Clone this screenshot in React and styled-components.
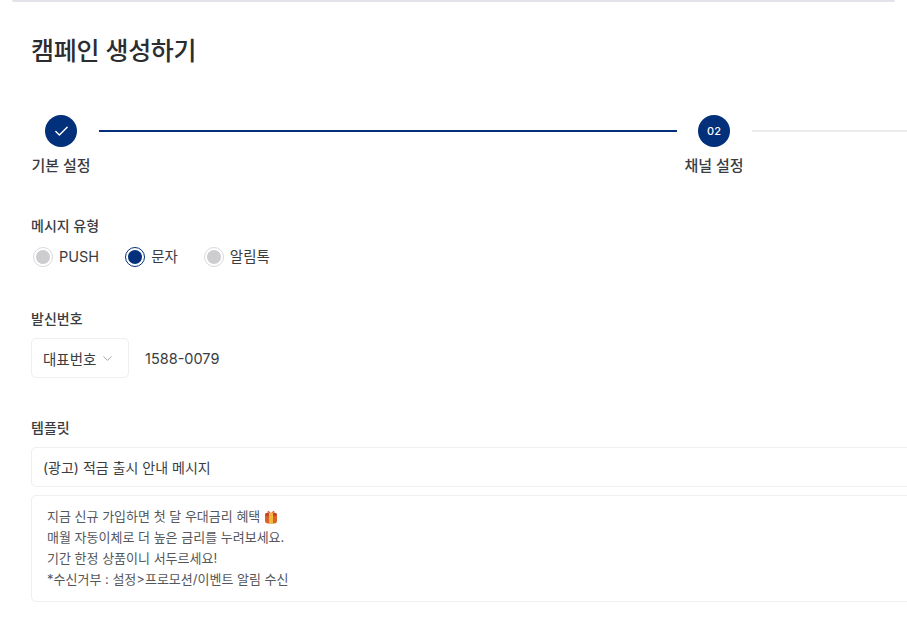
import React from 'react'
import styled, { createGlobalStyle } from 'styled-components'
import { Check, ChevronDown } from 'lucide-react'

const GlobalStyle = createGlobalStyle`
  html, body {
    margin: 0;
    padding: 0;
    background: #fff;
    overflow: hidden;
  }
  * {
    box-sizing: border-box;
  }
  body {
    font-family: Inter, "Noto Sans CJK KR", sans-serif;
    color: #26282b;
  }
`

const Page = styled.div`
  width: 907px;
  height: 640px;
  overflow: hidden;
`

const TopEdge = styled.div`
  width: 883px;
  height: 2px;
  margin-left: 12px;
  background: #e2e2e8;
  border-radius: 0 0 3px 3px;
`

const Content = styled.main`
  width: 960px;
  padding: 32px 0 0 31px;
`

const Title = styled.h1`
  margin: 0;
  font-size: 25px;
  line-height: 34px;
  font-weight: 500;
  letter-spacing: -0.3px;
  color: #2b2d30;
`

const Stepper = styled.div`
  display: flex;
  align-items: flex-start;
  margin-top: 47px;
`

const Step = styled.div`
  flex: none;
  width: 60px;
  display: flex;
  flex-direction: column;
  align-items: center;
  gap: 11px;
`

const StepDot = styled.div`
  width: 32px;
  height: 32px;
  border-radius: 50%;
  background: #03307a;
  color: #fff;
  display: flex;
  align-items: center;
  justify-content: center;
  font-size: 11px;
  font-weight: 500;
`

const StepLabel = styled.span`
  font-size: 15px;
  line-height: 16px;
  font-weight: 500;
  white-space: nowrap;
  color: #3a3c40;
`

const StepLine = styled.div`
  flex: ${(p) => (p.$width ? 'none' : '1')};
  width: ${(p) => (p.$width ? `${p.$width}px` : 'auto')};
  height: 2px;
  margin: 15px 7px 0 8px;
  background: ${(p) => (p.$done ? '#03307a' : '#ebebee')};
`

const Field = styled.section`
  margin-top: ${(p) => p.$top}px;
`

const Label = styled.div`
  font-size: 14px;
  line-height: 18px;
  font-weight: 500;
  color: #3a3c40;
`

const RadioRow = styled.div`
  display: flex;
  align-items: center;
  gap: 26px;
  margin-top: 12px;
  margin-left: 2px;
`

const RadioItem = styled.label`
  display: flex;
  align-items: center;
  gap: 6px;
  font-size: 14.5px;
  line-height: 20px;
  color: #3a3c40;
`

const RadioMark = styled.span`
  width: 20px;
  height: 20px;
  border-radius: 50%;
  border: 1px solid ${(p) => (p.$on ? '#03307a' : '#d9d9dc')};
  display: flex;
  align-items: center;
  justify-content: center;
  &::after {
    content: '';
    width: 14px;
    height: 14px;
    border-radius: 50%;
    background: ${(p) => (p.$on ? '#03307a' : '#cdcdd0')};
  }
`

const SenderRow = styled.div`
  display: flex;
  align-items: center;
  gap: 16px;
  margin-top: 10px;
`

const SelectBox = styled.div`
  width: 98px;
  height: 40px;
  border: 1px solid #efeff1;
  border-radius: 5px;
  display: flex;
  align-items: center;
  gap: 4px;
  padding-left: 11px;
  font-size: 14.5px;
  color: #3a3c40;
  svg {
    color: #8f8f94;
  }
`

const PhoneNumber = styled.span`
  font-size: 14.5px;
  color: #3a3c40;
`

const TemplateInput = styled.div`
  height: 40px;
  margin-top: 10px;
  border: 1px solid #efeff1;
  border-radius: 5px;
  display: flex;
  align-items: center;
  padding-left: 11px;
  font-size: 14px;
  color: #3a3c40;
`

const MessageBox = styled.div`
  margin-top: 8px;
  height: 107px;
  border: 1px solid #efeff1;
  border-radius: 5px;
  padding: 10px 15px;
  font-size: 13px;
  line-height: 21px;
  color: #55575b;
`

const MessageLine = styled.div`
  display: flex;
  align-items: center;
  gap: 4px;
  white-space: nowrap;
`

const GiftIcon = () => (
  <svg width="14" height="14" viewBox="0 0 14 14" aria-hidden="true">
    <rect x="1" y="3" width="12" height="10.5" rx="3" fill="#d9622b" />
    <rect x="1" y="3" width="12" height="3" rx="1.5" fill="#c8402a" />
    <rect x="5" y="3" width="4" height="10.5" fill="#f0b93a" />
    <path d="M7 3 4.4.8 2.8 2.6zM7 3 9.6.8l1.6 1.8z" fill="#e2562c" />
  </svg>
)

const App = () => {
  return (
    <Page>
      <GlobalStyle />
      <TopEdge />
      <Content>
        <Title>캠페인 생성하기</Title>
        <Stepper>
          <Step>
            <StepDot>
              <Check size={17} strokeWidth={2} />
            </StepDot>
            <StepLabel>기본 설정</StepLabel>
          </Step>
          <StepLine $done $width={578} />
          <Step>
            <StepDot>02</StepDot>
            <StepLabel>채널 설정</StepLabel>
          </Step>
          <StepLine />
        </Stepper>

        <Field $top={43}>
          <Label>메시지 유형</Label>
          <RadioRow>
            <RadioItem>
              <RadioMark />
              PUSH
            </RadioItem>
            <RadioItem>
              <RadioMark $on />
              문자
            </RadioItem>
            <RadioItem>
              <RadioMark />
              알림톡
            </RadioItem>
          </RadioRow>
        </Field>

        <Field $top={43}>
          <Label>발신번호</Label>
          <SenderRow>
            <SelectBox>
              대표번호
              <ChevronDown size={15} strokeWidth={1.25} />
            </SelectBox>
            <PhoneNumber>1588-0079</PhoneNumber>
          </SenderRow>
        </Field>

        <Field $top={41}>
          <Label>템플릿</Label>
          <TemplateInput>(광고) 적금 출시 안내 메시지</TemplateInput>
          <MessageBox>
            <MessageLine>
              지금 신규 가입하면 첫 달 우대금리 혜택 <GiftIcon />
            </MessageLine>
            <MessageLine>매월 자동이체로 더 높은 금리를 누려보세요.</MessageLine>
            <MessageLine>기간 한정 상품이니 서두르세요!</MessageLine>
            <MessageLine>*수신거부 : 설정&gt;프로모션/이벤트 알림 수신</MessageLine>
          </MessageBox>
        </Field>
      </Content>
    </Page>
  )
}

export default App
